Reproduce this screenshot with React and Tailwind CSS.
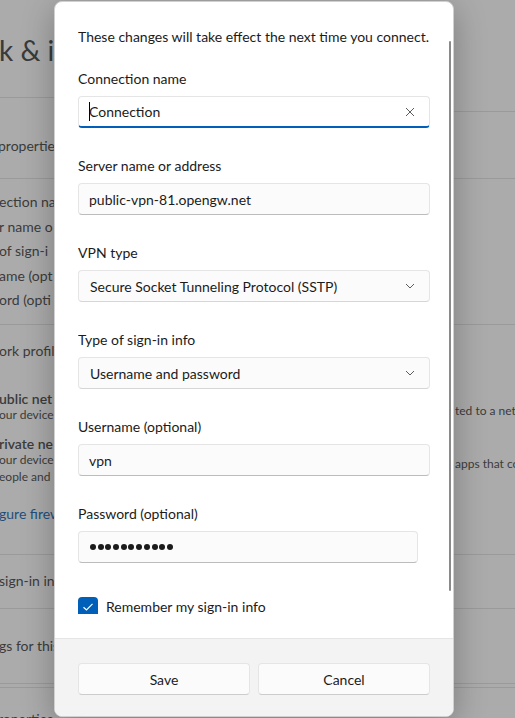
import React from "react";

const font = { fontFamily: 'Lato, "Noto Sans", "Liberation Sans", sans-serif' };

function Label({ children }) {
  return <div className="h-5 leading-5 text-[14px] text-[#1b1b1b]">{children}</div>;
}

function TextBox({ children, focused, width = "w-[352px]", clear }) {
  return (
    <div
      className={`mt-[7px] h-8 ${width} rounded-[4px] border flex items-center pl-[10px] pr-3 text-[14px] text-[#1b1b1b] ${
        focused
          ? "bg-white border-[#e5e5e5] border-b-2 border-b-[#005fb8]"
          : "bg-[#fbfbfb] border-[#e5e5e5] border-b-[#bcbcbc]"
      }`}
    >
      <div className="flex-1 flex items-center">{children}</div>
      {clear && (
        <svg width="10" height="10" viewBox="0 0 10 10" className="mr-[2px]">
          <path d="M1 1 L9 9 M9 1 L1 9" stroke="#5d5d5d" strokeWidth="1" fill="none" />
        </svg>
      )}
    </div>
  );
}

function Select({ children }) {
  return (
    <div className="mt-[7px] h-8 w-[352px] rounded-[4px] border border-[#e5e5e5] border-b-[#d6d6d6] bg-[#fbfbfb] flex items-center pl-[11px] pr-[14px] text-[14px] text-[#1b1b1b]">
      <div className="flex-1">{children}</div>
      <svg width="10" height="6" viewBox="0 0 10 6">
        <path d="M1 1 L5 5 L9 1" stroke="#5d5d5d" strokeWidth="1" fill="none" />
      </svg>
    </div>
  );
}

function Field({ label, children, first }) {
  return (
    <div className={first ? "mt-[22px]" : "mt-7"}>
      <Label>{label}</Label>
      {children}
    </div>
  );
}

function BgRow({ className = "", leftClass = "", rightClass = "", left, right }) {
  return (
    <div className={`flex justify-between overflow-hidden ${className}`}>
      <div className={`w-[54px] overflow-hidden whitespace-nowrap ${leftClass}`}>{left}</div>
      <div className={`w-[61px] overflow-hidden whitespace-nowrap ${rightClass}`}>{right}</div>
    </div>
  );
}

export default function App() {
  return (
    <div style={font} className="relative w-[515px] h-[718px] overflow-hidden bg-[#ababab] text-[#3b3b3b]">
      {/* dimmed settings page behind the dialog */}
      <div className="flex flex-col">
        <BgRow
          className="h-[97px] pt-[31px]"
          left={<div className="text-[28px] leading-[38px] text-[#3a3a3a] -ml-[1px]">k &amp; i</div>}
        />
        <BgRow
          className="h-[81px]"
          leftClass="border-t border-[#9a9a9a] pt-[38px]"
          left={<div className="text-[14px] leading-5 -ml-[2px]">propertie</div>}
          right={<div className="mt-[14px] border-t border-[#9a9a9a]" />}
        />
        <BgRow
          className="h-[146px] border-t border-[#9a9a9a] pt-[11px]"
          left={
            <div className="text-[14px] leading-[24.5px] -ml-[1px]">
              <div>ection na</div>
              <div>r name o</div>
              <div>of sign-i</div>
              <div>ame (opt</div>
              <div>ord (opti</div>
            </div>
          }
        />
        <BgRow
          className="h-[230px] border-t border-[#9a9a9a] pt-4"
          left={
            <div className="text-[14px] leading-5 -ml-[1px]">
              <div>ork profil</div>
              <div className="mt-7 font-semibold leading-5">ublic net</div>
              <div className="text-[12px] leading-4 -mt-[2px]">our device</div>
              <div className="mt-[11px] font-semibold leading-5">rivate ne</div>
              <div className="text-[12px] leading-4 -mt-[2px]">our device</div>
              <div className="text-[12px] leading-4 mt-[1px]">eople and</div>
              <div className="mt-[19px] text-[#1f4e7d]">gure firew</div>
            </div>
          }
          right={
            <div className="text-[12px] leading-4 pt-[62px] pl-[1px]">
              <div>ted to a net</div>
              <div className="mt-[37px]">apps that co</div>
            </div>
          }
        />
        <BgRow
          className="h-[51px] border-t border-[#9a9a9a] pt-4"
          left={<div className="text-[14px] leading-5 -ml-[1px]">sign-in in</div>}
        />
        <BgRow
          className="h-[72px] border-t border-[#9a9a9a] mt-[3px] pt-[27px]"
          left={<div className="text-[14px] leading-5 -ml-[1px]">gs for this</div>}
        />
        <div className="h-[1px] bg-[#9a9a9a] mt-[3px]" />
        <BgRow
          className="h-[40px] border-t border-[#9a9a9a] mt-[3px] pt-[21px]"
          left={<div className="text-[14px] leading-5 -ml-[2px]">roperties</div>}
        />
      </div>

      {/* dialog */}
      <div className="absolute left-[54px] top-[1px] w-[400px] h-[716px] bg-white rounded-lg border border-[#d0d0d0] shadow-[0_8px_32px_rgba(0,0,0,0.28)] flex flex-col overflow-hidden">
        <div className="relative flex-1 px-[23px] pt-[25px] pb-6">
          <div className="h-[587px] overflow-hidden">
            <div className="h-5 leading-5 text-[14px] text-[#1b1b1b] whitespace-nowrap">
              These changes will take effect the next time you connect.
            </div>

            <Field label="Connection name" first>
              <TextBox focused clear>
                <span className="inline-block w-px h-[19px] bg-black -mr-px" />
                <span>Connection</span>
              </TextBox>
            </Field>

            <Field label="Server name or address">
              <TextBox>public-vpn-81.opengw.net</TextBox>
            </Field>

            <Field label="VPN type">
              <Select>Secure Socket Tunneling Protocol (SSTP)</Select>
            </Field>

            <Field label="Type of sign-in info">
              <Select>Username and password</Select>
            </Field>

            <Field label="Username (optional)">
              <TextBox>vpn</TextBox>
            </Field>

            <Field label="Password (optional)">
              <TextBox width="w-[340px]">
                <div className="flex gap-[1.7px] pl-[1px]">
                  {Array.from({ length: 11 }).map((_, i) => (
                    <span key={i} className="block w-[6px] h-[6px] rounded-full bg-[#1b1b1b]" />
                  ))}
                </div>
              </TextBox>
            </Field>

            <div className="mt-[34px] flex items-center gap-2 h-5">
              <div className="w-5 h-5 rounded-[4px] bg-[#005fb8] flex items-center justify-center">
                <svg width="12" height="10" viewBox="0 0 12 10">
                  <path d="M1.5 5.2 L4.5 8 L10.5 1.8" stroke="white" strokeWidth="1.2" fill="none" />
                </svg>
              </div>
              <span className="text-[14px] text-[#1b1b1b] leading-5">Remember my sign-in info</span>
            </div>
            <div className="h-10" />
          </div>
          <div className="absolute right-[2px] top-[39px] w-[2px] h-[550px] rounded-full bg-[#8a8a8a]" />
        </div>

        <div className="h-[79px] shrink-0 bg-[#f3f3f3] border-t border-[#e5e5e5] px-[23px] pt-6 flex gap-2">
          <button className="h-8 flex-1 rounded-[4px] bg-[#fbfbfb] border border-[#e5e5e5] border-b-[#cccccc] text-[14px] text-[#1b1b1b]">
            Save
          </button>
          <button className="h-8 flex-1 rounded-[4px] bg-[#fbfbfb] border border-[#e5e5e5] border-b-[#cccccc] text-[14px] text-[#1b1b1b]">
            Cancel
          </button>
        </div>
      </div>
    </div>
  );
}
